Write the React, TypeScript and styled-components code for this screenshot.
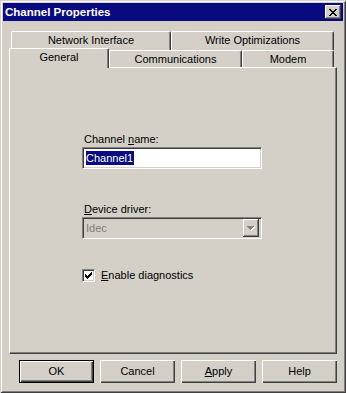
import React from 'react';
import styled, { createGlobalStyle } from 'styled-components';

const FACE = '#d4d0c8';
const SHADOW = '#808080';
const DARK = '#404040';

const GlobalStyle = createGlobalStyle`
    html, body {
        margin: 0;
        padding: 0;
        background: ${FACE};
    }
    body {
        font-family: "Liberation Sans", Arial, sans-serif;
        font-size: 11px;
        color: #000;
    }
`;

const Window = styled.div`
    width: 346px;
    height: 393px;
    box-sizing: border-box;
    padding: 3px;
    background: ${FACE};
    box-shadow: inset 1px 1px ${FACE}, inset -1px -1px ${DARK},
        inset 2px 2px #ffffff, inset -2px -2px ${SHADOW};
    display: flex;
    flex-direction: column;
`;

const TitleBar = styled.div`
    height: 18px;
    background: #0a0a80;
    display: flex;
    align-items: center;
    justify-content: space-between;
    padding: 0 2px 0 2px;
`;

const Title = styled.span`
    color: #ffffff;
    font-weight: bold;
    font-size: 11.5px;
    line-height: 13px;
    margin-top: 1px;
`;

const CloseButton = styled.div`
    width: 16px;
    height: 14px;
    box-sizing: border-box;
    background: ${FACE};
    box-shadow: inset -1px -1px ${DARK}, inset 1px 1px #ffffff, inset -2px -2px ${SHADOW};
    display: flex;
    align-items: center;
    justify-content: center;
`;

const Body = styled.div`
    flex: 1;
    display: flex;
    flex-direction: column;
    padding: 10px 6px 0 6px;
`;

const TabRow = styled.div<{ $h: number; $indent: number }>`
    display: flex;
    align-items: flex-start;
    height: ${(p) => p.$h}px;
    padding-left: ${(p) => p.$indent}px;
`;

const Tab = styled.div<{ $w: number; $active?: boolean; $h: number }>`
    width: ${(p) => p.$w}px;
    height: ${(p) => (p.$active ? p.$h + 3 : p.$h)}px;
    margin-top: ${(p) => (p.$active ? -2 : 0)}px;
    box-sizing: border-box;
    position: relative;
    z-index: ${(p) => (p.$active ? 2 : 0)};
    background: ${FACE};
    border-top: 1px solid #ffffff;
    border-left: 1px solid #ffffff;
    border-right: 1px solid ${DARK};
    border-radius: 2px 2px 0 0;
    box-shadow: inset -1px 0 ${SHADOW};
    display: flex;
    justify-content: center;
    padding-top: 2px;
    line-height: 13px;
    white-space: nowrap;
`;

const Panel = styled.div`
    position: relative;
    z-index: 1;
    height: 287px;
    box-sizing: border-box;
    border-top: 1px solid #ffffff;
    border-left: 1px solid #ffffff;
    border-right: 1px solid ${DARK};
    border-bottom: 1px solid ${DARK};
    box-shadow: inset -1px -1px ${SHADOW};
    padding: 65px 0 0 72px;
    display: flex;
    flex-direction: column;
`;

const Label = styled.div`
    line-height: 13px;
    padding-left: 2px;
    margin-bottom: 1px;
`;

const Sunken = styled.div<{ $bg: string }>`
    width: 180px;
    height: 22px;
    box-sizing: border-box;
    background: ${(p) => p.$bg};
    border-top: 1px solid ${SHADOW};
    border-left: 1px solid ${SHADOW};
    border-right: 1px solid #ffffff;
    border-bottom: 1px solid #ffffff;
    box-shadow: inset 1px 1px ${DARK}, inset -1px -1px ${FACE};
    display: flex;
    align-items: center;
    padding: 0 2px 0 3px;
`;

const Selected = styled.span`
    background: #0a0a80;
    color: #ffffff;
    line-height: 14px;
    padding: 0 1px 0 0;
`;

const DisabledText = styled.span`
    flex: 1;
    color: ${SHADOW};
    line-height: 14px;
`;

const DropButton = styled.div`
    width: 16px;
    height: 18px;
    box-sizing: border-box;
    background: ${FACE};
    box-shadow: inset -1px -1px ${DARK}, inset 1px 1px #ffffff, inset -2px -2px ${SHADOW};
    display: flex;
    align-items: center;
    justify-content: center;
`;

const Spacer = styled.div<{ $h: number }>`
    height: ${(p) => p.$h}px;
`;

const CheckRow = styled.label`
    display: flex;
    align-items: center;
    gap: 6px;
    line-height: 13px;
`;

const CheckBox = styled.div`
    width: 13px;
    height: 13px;
    box-sizing: border-box;
    background: #ffffff;
    border-top: 1px solid ${SHADOW};
    border-left: 1px solid ${SHADOW};
    border-right: 1px solid #ffffff;
    border-bottom: 1px solid #ffffff;
    box-shadow: inset 1px 1px ${DARK}, inset -1px -1px ${FACE};
    display: flex;
    align-items: center;
    justify-content: center;
`;

const ButtonRow = styled.div`
    display: flex;
    justify-content: flex-end;
    gap: 6px;
    margin-top: 6px;
`;

const Button = styled.div<{ $default?: boolean }>`
    width: 75px;
    height: 23px;
    box-sizing: border-box;
    background: ${FACE};
    border: ${(p) => (p.$default ? '1px solid #000' : 'none')};
    box-shadow: inset 1px 1px #ffffff, inset -1px -1px ${DARK}, inset -2px -2px ${SHADOW};
    display: flex;
    align-items: center;
    justify-content: center;
    line-height: 13px;
`;

const Key = styled.span`
    text-decoration: underline;
`;

const CloseGlyph = () => (
    <svg width="8" height="7" viewBox="0 0 8 7" shapeRendering="crispEdges">
        {[0, 1, 2, 3, 4, 5, 6].map((i) => (
            <React.Fragment key={i}>
                <rect x={i} y={i} width="2" height="1" fill="#000" />
                <rect x={6 - i} y={i} width="2" height="1" fill="#000" />
            </React.Fragment>
        ))}
    </svg>
);

const Arrow = () => (
    <svg width="8" height="5" viewBox="0 0 8 5" shapeRendering="crispEdges">
        <rect x="1" y="1" width="7" height="1" fill="#fff" />
        <rect x="2" y="2" width="5" height="1" fill="#fff" />
        <rect x="3" y="3" width="3" height="1" fill="#fff" />
        <rect x="4" y="4" width="1" height="1" fill="#fff" />
        <rect x="0" y="0" width="7" height="1" fill={SHADOW} />
        <rect x="1" y="1" width="5" height="1" fill={SHADOW} />
        <rect x="2" y="2" width="3" height="1" fill={SHADOW} />
        <rect x="3" y="3" width="1" height="1" fill={SHADOW} />
    </svg>
);

const Check = () => (
    <svg width="7" height="7" viewBox="0 0 7 7" shapeRendering="crispEdges">
        {[2, 3, 4, 3, 2, 1, 0].map((y, x) => (
            <rect key={x} x={x} y={y} width="1" height="3" fill="#000" />
        ))}
    </svg>
);

export default function App() {
    return (
        <>
            <GlobalStyle />
            <Window>
                <TitleBar>
                    <Title>Channel Properties</Title>
                    <CloseButton>
                        <CloseGlyph />
                    </CloseButton>
                </TitleBar>
                <Body>
                    <TabRow $h={19} $indent={2}>
                        <Tab $w={160} $h={19}>Network Interface</Tab>
                        <Tab $w={163} $h={19}>Write Optimizations</Tab>
                    </TabRow>
                    <TabRow $h={17} $indent={0}>
                        <Tab $w={100} $h={17} $active>
                            General
                        </Tab>
                        <Tab $w={133} $h={17}>Communications</Tab>
                        <Tab $w={92} $h={17}>Modem</Tab>
                    </TabRow>
                    <Panel>
                        <Label>
                            Channel <Key>n</Key>ame:
                        </Label>
                        <Sunken $bg="#ffffff">
                            <Selected>Channel1</Selected>
                        </Sunken>
                        <Spacer $h={34} />
                        <Label>
                            <Key>D</Key>evice driver:
                        </Label>
                        <Sunken $bg={FACE}>
                            <DisabledText>Idec</DisabledText>
                            <DropButton>
                                <Arrow />
                            </DropButton>
                        </Sunken>
                        <Spacer $h={30} />
                        <CheckRow>
                            <CheckBox>
                                <Check />
                            </CheckBox>
                            <span>
                                <Key>E</Key>nable diagnostics
                            </span>
                        </CheckRow>
                    </Panel>
                    <ButtonRow>
                        <Button $default>OK</Button>
                        <Button>Cancel</Button>
                        <Button>
                            <Key>A</Key>pply
                        </Button>
                        <Button>Help</Button>
                    </ButtonRow>
                </Body>
            </Window>
        </>
    );
}
